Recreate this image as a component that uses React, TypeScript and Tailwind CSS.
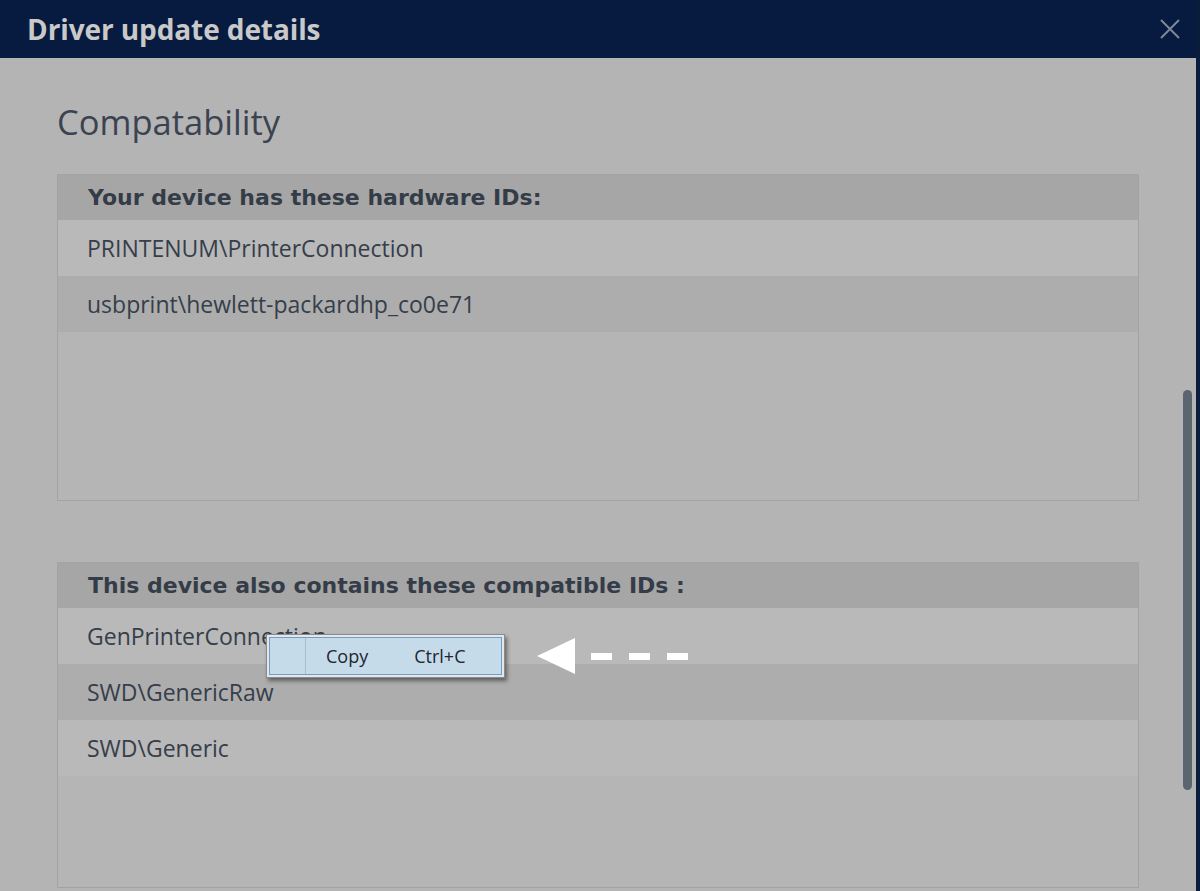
const hardwareIds = ["PRINTENUM\\PrinterConnection", "usbprint\\hewlett-packardhp_co0e71"];
const compatibleIds = ["GenPrinterConnection", "SWD\\GenericRaw", "SWD\\Generic"];

const font = { fontFamily: '"Open Sans", "Noto Sans", sans-serif' };
const headFont = { fontFamily: '"DejaVu Sans", Verdana, sans-serif' };

function IdBox({ title, ids, height }: { title: string; ids: string[]; height: string }) {
  return (
    <div className={`flex flex-col border border-[#a3a3a3] bg-[#b5b5b5] ${height}`}>
      <div
        className="flex h-[45px] shrink-0 items-center bg-[#a6a6a6] px-[30px] text-[22px] font-bold text-[#343c48]"
        style={headFont}
      >
        {title}
      </div>
      {ids.map((id, i) => (
        <div
          key={id}
          className={`flex h-[56px] shrink-0 items-center px-[29px] text-[23px] text-[#363e4a] ${
            i % 2 === 0 ? "bg-[#b9b9b9]" : "bg-[#adadad]"
          }`}
        >
          {id}
        </div>
      ))}
    </div>
  );
}

export default function App() {
  return (
    <div
      className="relative flex h-[891px] w-[1200px] flex-col overflow-hidden bg-[#b4b4b4] border-r-4 border-[#0b1d3c]"
      style={font}
    >
      <div className="flex h-[58px] shrink-0 items-center justify-between bg-[#061b3f] pl-[27px] pr-[16px]">
        <span className="text-[28px] font-bold tracking-[-0.1px] text-[#c9c9c9]">Driver update details</span>
        <svg width="20" height="20" viewBox="0 0 20 20" className="mt-[-1px]">
          <path d="M1 1 L19 19 M19 1 L1 19" stroke="#7f8897" strokeWidth="2" />
        </svg>
      </div>

      <div className="flex flex-col pl-[57px] pr-[57px]">
        <h1 className="mt-[38px] text-[34.5px] leading-[52px] text-[#3b4350]">Compatability</h1>
        <div className="mt-[26px]">
          <IdBox title="Your device has these hardware IDs:" ids={hardwareIds} height="h-[327px]" />
        </div>
        <div className="mt-[61px]">
          <IdBox title="This device also contains these compatible IDs :" ids={compatibleIds} height="h-[326px]" />
        </div>
      </div>

      {/* scrollbar */}
      <div className="absolute left-[1183px] top-[390px] h-[400px] w-[9px] rounded-full bg-[#5a6570]" />

      {/* context menu */}
      <div className="absolute left-[266px] top-[634px] h-[44px] w-[239px] border border-[#8a8a8a] bg-[#e6e6e6] p-[2px] shadow-[2px_3px_4px_rgba(0,0,0,0.45)]">
        <div className="flex h-full items-center border border-[#6b9fcf] bg-[#c6dbea] text-[18px] text-[#1e2530]">
          <div className="h-full w-[36px] border-r border-[#a9bfd0]" />
          <span className="ml-[20px]">Copy</span>
          <span className="ml-[46px]">Ctrl+C</span>
        </div>
      </div>

      {/* arrow */}
      <div className="absolute left-[537px] top-[638px] flex items-center">
        <svg width="40" height="36" viewBox="0 0 40 36">
          <polygon points="0,18 38,0 38,36" fill="#ffffff" />
        </svg>
        <div className="ml-[14px] h-[7px] w-[21px] bg-white" />
        <div className="ml-[17px] h-[7px] w-[21px] bg-white" />
        <div className="ml-[17px] h-[7px] w-[21px] bg-white" />
      </div>
    </div>
  );
}
